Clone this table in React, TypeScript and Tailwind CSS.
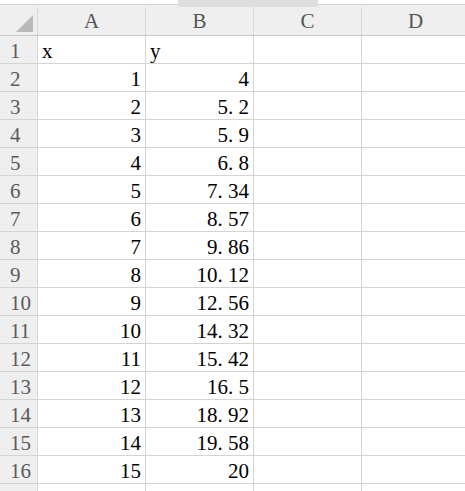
import React from "react";

const rows: [string, string][] = [
  ["x", "y"],
  ["1", "4"],
  ["2", "5.2"],
  ["3", "5.9"],
  ["4", "6.8"],
  ["5", "7.34"],
  ["6", "8.57"],
  ["7", "9.86"],
  ["8", "10.12"],
  ["9", "12.56"],
  ["10", "14.32"],
  ["11", "15.42"],
  ["12", "16.5"],
  ["13", "18.92"],
  ["14", "19.58"],
  ["15", "20"],
  ["", ""],
];

const cols = ["A", "B", "C", "D"];

// SimSun-like: the dot takes a whole half-width cell
const Val = ({ v }: { v: string }) => {
  const parts = v.split(".");
  if (parts.length === 1) return <>{v}</>;
  return (
    <>
      {parts[0]}
      <span className="inline-block w-[10.5px] text-left">.</span>
      {parts[1]}
    </>
  );
};

const isNum = (v: string) => v !== "" && !isNaN(Number(v));

const Cell = ({ v }: { v: string }) => (
  <div
    className={`w-[108px] shrink-0 h-full border-r border-b border-[#d4d4d4] px-[4px] pt-px text-black whitespace-nowrap overflow-hidden ${
      isNum(v) ? "text-right" : "text-left"
    }`}
  >
    <Val v={v} />
  </div>
);

export default function App() {
  return (
    <div
      className="w-[465px] h-[491px] overflow-hidden bg-white text-[21px] leading-[28px]"
      style={{ fontFamily: '"Liberation Serif", "Noto Sans CJK SC", serif' }}
    >
      {/* top strip with sheet tab */}
      <div className="flex h-[7px] bg-[#efefef]">
        <div className="w-[178px]">
          <div className="h-[5px] bg-white border-b border-[#d2d2d2]" />
        </div>
        <div className="w-[140px] bg-[#dedede]" />
        <div className="flex-1">
          <div className="h-[5px] bg-white border-b border-[#d2d2d2]" />
        </div>
      </div>

      {/* column headers */}
      <div className="flex h-[29px] bg-[#efefef] border-b border-[#c8c8c8] text-[#555]">
        <div className="w-[38px] shrink-0 h-full border-r border-[#d8d8d8] relative">
          <svg className="absolute left-[16px] top-[8px]" width="17" height="17" viewBox="0 0 17 17">
            <polygon points="17,0 17,17 0,17" fill="#b9b9b9" />
          </svg>
        </div>
        {cols.map((c) => (
          <div
            key={c}
            className="w-[108px] shrink-0 h-full border-r border-[#d8d8d8] text-center leading-[28px]"
          >
            {c}
          </div>
        ))}
      </div>

      {/* rows */}
      {rows.map((r, i) => (
        <div key={i} className="flex h-[28px]">
          <div className="w-[38px] shrink-0 h-full bg-[#efefef] border-r border-b border-[#d4d4d4] pl-[10px] pt-px text-[#5a5a5a]">
            {i < 16 ? i + 1 : ""}
          </div>
          <Cell v={r[0]} />
          <Cell v={r[1]} />
          <Cell v="" />
          <Cell v="" />
        </div>
      ))}
    </div>
  );
}
